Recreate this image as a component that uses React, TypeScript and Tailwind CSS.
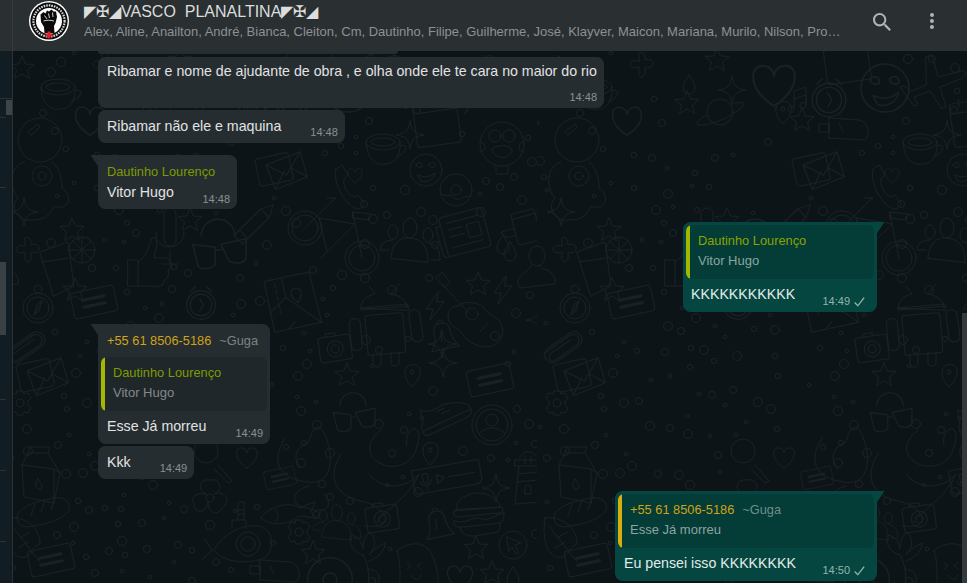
import type { ReactNode } from "react";

const shapes: Record<string, ReactNode> = {
  star: <path d="M0-12L3.5-4 12-3.5 5.5 2 7.5 10.5 0 6-7.5 10.5-5.5 2-12-3.5-3.5-4Z" />,
  sparkle: <path d="M0-14C1.5-4 4-1.5 14 0C4 1.5 1.5 4 0 14C-1.5 4-4 1.5-14 0C-4-1.5-1.5-4 0-14Z" />,
  cross: <path d="M-3-12C0-14 3-12 3-5C8-7 12-4 11-1C11 3 6 3 3 2C4 8 2 12-1 12C-4 11-3 6-3 2C-8 4-12 2-12-1C-12-4-7-5-3-4Z" />,
  drop: <path d="M0-10C4-4 6-1 6 3A6 6 0 0 1-6 3C-6-1-4-4 0-10Z" />,
  bolt: <path d="M3-14L-9 3H-2L-5 14L9-4H2Z" />,
  heart: <path d="M0 11C-14 2-12-10-5-9C-2-9 0-6 0-4C0-6 2-9 5-9C12-10 14 2 0 11Z" />,
  bike: (
    <g>
      <circle cx="-28" cy="-8" r="17" />
      <circle cx="-28" cy="-8" r="13" />
      <circle cx="29" cy="22" r="17" />
      <circle cx="29" cy="22" r="13" />
      <path d="M-28-8L-2-34L3-38H-6M-14-18L22-12L-6 16L-14-18M22-12L29 22M20-24L38-22L36-16L20-18ZM22-12L20-24M-6 16L-12 22" />
    </g>
  ),
  people: (
    <g>
      <ellipse cx="0" cy="-18" rx="7" ry="10" />
      <ellipse cx="-17" cy="-14" rx="5" ry="7" />
      <ellipse cx="18" cy="-11" rx="5" ry="7" />
      <path d="M-19 12C-18-5-8-9 0-8C10-7 18-2 18 16ZM-21 4H-30C-30-3-24-6-17-6M21 14H30C30 4 26-2 19-3" />
    </g>
  ),
  news: (
    <g transform="rotate(-15)">
      <rect x="-22" y="-20" width="44" height="40" rx="3" />
      <path d="M-22-12H-27V16C-27 20-25 20-22 20M-16-13H16M-16-6H-1M-16 1H-1M-16 12H16" />
      <rect x="3" y="-7" width="13" height="14" rx="2" />
    </g>
  ),
  mug: (
    <g transform="rotate(-15)">
      <rect x="-12" y="-15" width="24" height="32" rx="3" />
      <path d="M12-9H20V8H12M-12-10H12M-12 6C-18 8-24 6-26 0C-20-1-16-1-12 0" />
    </g>
  ),
  person: <path d="M-8-14A8 10 0 1 1 8-14A8 10 0 1 1-8-14M-6-5C-6 0-14 2-18 8C-20 12-19 16-17 18L18 14C20 6 12-1 6-1C4-3 3-4 3-5" />,
  compass: (
    <g>
      <circle r="15" />
      <circle r="11" />
      <circle cy="-19" r="4" />
      <path d="M4-7L-4 7L-1-3Z M4-7L1 3L-4 7" />
    </g>
  ),
  android: (
    <g>
      <path d="M-24-10C-24-22-10-24-10-24L-16-32M22-10C22-22 6-24 6-24L14-34M-24-10L22-14C24-10 24-8 24-8ZM-24-10V-8L24-12" />
      <rect x="-20" y="-4" width="38" height="40" rx="3" transform="rotate(-5)" />
      <rect x="-36" y="-2" width="11" height="32" rx="5" transform="rotate(-5)" />
      <rect x="24" y="-4" width="11" height="32" rx="5" transform="rotate(-8)" />
      <path d="M-12 36V46C-12 50-4 50-4 46V36M6 34V45C6 49 14 49 14 45V34" />
    </g>
  ),
  guitar: (
    <g>
      <path d="M-30-28L-4 0M-36-34L-30-40L-22-30L-27-25ZM-14-6C-28-6-26 12-16 16C-10 18-8 30 8 34C22 38 34 28 30 14C28 4 16 4 12-4C6-10-8-12-14-6Z" />
      <circle cx="0" cy="2" r="6" />
      <path d="M8 20L16 11" />
    </g>
  ),
  map: (
    <g transform="rotate(-12)">
      <path d="M-24-22H22L24 30L-24 30ZM-24 10L-6 -2L24 30M-6-22V-2M-2 24L-10 30" strokeDasharray="none" />
      <path d="M-14-18V16" strokeDasharray="4 3" />
      <path d="M0-4A5 5 0 0 1 10-4C10 0 5 6 5 6C5 6 0 0 0-4Z" />
    </g>
  ),
  camera: (
    <g transform="rotate(-8)">
      <rect x="-16" y="-11" width="32" height="25" rx="3" />
      <path d="M-8-11V-14H2V-11" />
      <circle cy="2" r="8" />
      <circle cy="2" r="4" />
    </g>
  ),
  bell: (
    <g transform="rotate(-12)">
      <path d="M-14 12C-8 6-8 0-8-6C-8-12-4-14 0-14C5-14 8-11 8-6C8 0 10 6 14 12ZM-3-14A3 3 0 0 1 3-14M-2 4L-1-6" />
    </g>
  ),
  clip: (
    <g transform="rotate(-35)">
      <path d="M-20-2H12A6 6 0 0 1 12 10H-14A4 4 0 0 1-14 2H10" />
      <rect x="-21" y="-4" width="42" height="16" rx="8" />
    </g>
  ),
  envelope: (
    <g transform="rotate(-12)">
      <rect x="-24" y="-14" width="34" height="28" rx="3" />
      <path d="M-14-6L22-12L24 14L-10 20ZM-14-6L4 8L22-12M-10 20L2 4M24 14L10 2" />
    </g>
  ),
  msg: (
    <g transform="rotate(-12)">
      <rect x="-22" y="-13" width="44" height="26" rx="3" />
      <path d="M-11-4H11M-11 3H11" strokeWidth="3" />
    </g>
  ),
  astronaut: (
    <g>
      <circle cy="-22" r="22" />
      <path d="M-12-30L-2-38L0-35L-9-27ZM-16 0C-30 4-32 24-22 36C-30 44-24 60-8 58C4 58 10 54 14 44C28 50 34 34 22 26C22 14 18 4 12 0" />
      <circle cx="2" cy="14" r="10" />
      <circle cx="2" cy="14" r="4" />
    </g>
  ),
  face: (
    <g>
      <circle r="16" />
      <path d="M-10-5C-8-9-3-8-4-3C-6-2-9-3-10-5ZM3-6C6-9 10-8 9-3C7-2 3-3 3-6ZM-8 5C-2 8 4 7 9 3C8 10 0 13-5 11Z" />
    </g>
  ),
  plane: <path d="M-4-28L2-30L8-8L32-14C38-14 36-8 30-6L10 2L16 22L12 24L0 6L-16 12L-12 20L-16 21L-24 10L-30 2L-26 1L-18 6L-4 0Z" />,
  clock: (
    <g>
      <circle r="12" />
      <circle r="9" />
      <path d="M-1-5L2 0L-1 5M-5-15L-9-11M5-15L9-11" />
    </g>
  ),
  music: <path d="M-6 10A3 3 0 1 1-6 9V-9L6-13V6A3 3 0 1 1 6 5V-5L-6-1" />,
  pin: <path d="M-7-4A8 8 0 0 1 8-6C10 0 4 8 0 12C-4 8-8 2-7-4ZM0-5A2 2 0 1 1 0-1A2 2 0 1 1 0-5Z" />,
  planet: (
    <g>
      <circle r="13" />
      <path d="M-13 3C-24 8-26 14-18 13C-8 13 10 5 20-3C26-8 24-12 13-8" />
    </g>
  ),
  burger: (
    <g>
      <path d="M-22-6C-22-16-10-22 0-22C12-22 22-14 22-8ZM-24-4L24-8C26-4 24-2 20-2L-20 2C-24 2-25 0-24-4ZM-24 6C-12 10-4 0 4 4C12 6 20-2 26-2M-24 6C-26 12-20 12-14 12L22 8C26 6 26 2 26-2M-18 12C-18 22-4 22 2 20L20 17C22 14 22 12 22 8" />
    </g>
  ),
  lighthouse: <path d="M-8-20L-2-26H4L10-22M-12-18H12L12-12H-12ZM-8-12L-12 26L14 24L10-12M-10 4L12 2M-9-4L11-6M-2 10A3 3 0 0 1 4 10L4 16H-2ZM-2-22L-2-14M4-22L4-14" />,
  milk: <path d="M-18-10L-12-22H8L10-28H-10L-12-22M-18-10L-16 22L14 28L20-2L8-22M-18-10L14-6L14 28M14-6L20-2M-2 4C2 10 4 12 0 14C-4 14-6 10-2 4Z" />,
  bread: <path d="M-26 6C-26-4-10-10 10-14C24-16 28-8 26-2C22 6 6 12-10 14C-18 16-26 14-26 6ZM-8-8L-12 4M2-12L-2 0M12-14L8-2" />,
  leaf: <path d="M-12-22C4-24 20-14 20 4C10 8 14 12 8 16C-6 22-16 6-12-22ZM-8-14L20 22M0-2L10-8M-2 8L8 2" />,
  gear: (
    <g>
      <circle r="4" />
      <path d="M-3-12H3L4-9L8-10L11-5L8-2V2L11 5L8 10L4 9L3 12H-3L-4 9L-8 10L-11 5L-8 2V-2L-11-5L-8-10L-4-9Z" />
    </g>
  ),
  sub: (
    <g>
      <path d="M-26 10C-18-6 2-16 18-14C34-12 36 10 24 18C10 24-16 24-26 10ZM-8-12V-20H6V-13M-2-20V-38H4V-20M-2-30H4M-2-26H4M-28 10L-36-2M-28 10L-38 20" />
      <circle cx="8" cy="4" r="12" />
      <circle cx="8" cy="4" r="7" />
    </g>
  ),
  fish: <path d="M-26 10C-16-4 4-6 14 0C20-4 24-4 28-6L24 4L30 10C24 10 18 8 12 8C0 18-16 18-26 10ZM-12 1C-8 6-8 10-12 13" />,
  flower: (
    <g>
      <circle r="4" />
      <path d="M-4-4C-14-8-10-20 0-18C10-20 14-8 4-4C14-8 22 2 12 10C8 18-2 16-2 4C-4 16-16 16-16 6C-20 0-14-6-4-4Z" />
    </g>
  ),
  glass: <path d="M-12-10A8 8 0 0 1 12-10M-18-4L-14 12C-12 14-4 14-2 10L-2-2L-18-4ZM2-4L8 8C12 10 18 10 20 6L20-8L2-4ZM-2 0H2" />,
  avatar: (
    <g>
      <circle r="20" />
      <circle r="16" />
      <circle cy="-5" r="6" />
      <path d="M-13 9C-8 1 8 1 13 9" />
    </g>
  ),
  shoe: (
    <g transform="rotate(-25)">
      <path d="M-26-4C-20-10-22-14-20-20C-14-14-6-14 2-16C12-14 22-10 26-4C28 2 24 6 18 6H-22C-28 6-28 0-26-4ZM-26 0H26M-6-12H2M-2-8H6" />
    </g>
  ),
  voice: (
    <g transform="rotate(-10)">
      <path d="M-34-12H34V6C34 10 32 12 28 12H-30C-33 12-34 10-34 6Z" />
      <path d="M-10-4L-3 0L-10 5ZM2 0H28M-24-6A3 3 0 0 1-19-6V1A3 3 0 0 1-24 1ZM-27 0C-27 6-17 6-16 0M-21 5V10" />
    </g>
  ),
  phone: <path d="M-10-18L-4-22L2-12L-2-8C-4-2 2 8 8 10L12 8L18 16L14 22C4 24-14 0-10-18Z" />,
  mic: <path d="M-6-26A6 6 0 0 1 6-26V0A6 6 0 0 1-6 0ZM-14-8C-16 12 14 12 14-8M0 10V24M-8 24H8" />,
  cup: (
    <g>
      <ellipse cx="-2" cy="-8" rx="17" ry="8" />
      <ellipse cx="-2" cy="-8" rx="12" ry="4" />
      <path d="M-19-8C-18 10-8 16 0 14C10 14 16 6 15-8M15-4C24-8 22 4 12 6" />
    </g>
  ),
  donut: (
    <g>
      <circle r="16" />
      <circle r="5" />
      <path d="M-14 4C-8 8-6 2-2 8C2 12 6 6 14 6" />
    </g>
  ),
  monkey: (
    <g>
      <circle cy="-4" r="22" />
      <circle cx="-7" cy="-12" r="6" />
      <circle cx="7" cy="-12" r="6" />
      <path d="M-22-6A5 5 0 1 1-22 4M22-6A5 5 0 1 0 22 4M-10 2C-8-4 8-4 10 2C10 10-6 14-10 2ZM-6 18V26H6V18" />
    </g>
  ),
  pencil: (
    <g transform="rotate(-45)">
      <path d="M-24-6H14L26 0L14 6H-24ZM-16-6V6M14-6V6" />
    </g>
  ),
  thumb: <path d="M-18-4H-8V22H-18ZM-8-2C0-6 2-16 6-26C10-28 12-22 10-16L8-6H20C26-6 26 4 22 6C24 12 20 16 18 16C18 22 12 24 6 22H-8" />,
  glassLemon: (
    <g>
      <path d="M-22-16L6-26L12 18L-8 28Z M-20-6L8-10" />
      <circle cx="20" cy="-18" r="13" />
      <path d="M20-31V-5M7-18H33M11-27L29-9M29-27L11-9" />
    </g>
  ),
  calendar: (
    <g transform="rotate(-8)">
      <rect x="-22" y="-24" width="44" height="44" rx="3" />
      <path d="M-22-14H22M-12-28V-20M12-28V-20" />
    </g>
  ),
  octopus: (
    <path d="M-72-32C-86-10-80 8-50 12C-28 16-22-6-30-30C-36-48-44-46-48-28C-60-24-66-12-56-2M-16-16C-30 6-24 26 8 32C30 38 40 60 8 56M-48 16C-66 20-68 36-50 38C-34 44-22 38-32 24M24-40C6-26 10-10 30-4C44-2 60-8 62-34C62-48 46-40 50-24M12 4C24 20 48 20 62 4C52 28 32 36 20 52" />
  ),
  magnifier: <path d="M8 8L22 24L18 26L4 12M-16-6A12 12 0 1 1 8-6A12 12 0 1 1-16-6" />,
  plant: <path d="M0 32C4 16 0 6-4-2C-18-6-18-18-16-22C-8-20-6-16-4-8C-4-18 0-24 4-24C10-16 8-8 2-2C6-8 14-12 18-14C18-6 12 0 2 4M-10 24A12 12 0 0 0 12 24C14 14 4 12 0 12" />,
  toast: <path d="M-20-16C-10-26 8-26 14-14C24 6 22 28 18 40H-20C-16 20-16 -6-20-16ZM-10-4L-6-1L-10 2M4-4L0-1L4 2M-6 8C-2 14 2 14 4 8" />,
  bottle: <path d="M-18-10L12-8C22-6 24 8 18 12L-18 10ZM-18-4H-28V4H-18ZM-8-4L-4 4" />,
  cursor: (
    <g>
      <circle r="14" />
      <path d="M-6-8L8-2L2 0L6 8L3 9L-1 2L-4 6Z" />
    </g>
  ),
};

// x, y in the repeating 537px tile
const placed: [string, number, number, number?][] = [
  ["star", 22, 68], ["sparkle", 24, 212], ["cross", 28, 250], ["compass", 38, 308], ["clip", 24, 344],
  ["envelope", 42, 374], ["gear", 20, 403], ["star", 75, 290], ["milk", 40, 475], ["bread", 43, 512],
  ["leaf", 20, 540], ["msg", 51, 560], ["astronaut", 40, 162], ["glassLemon", 62, 268], ["msg", 94, 302],
  ["thumb", 146, 264], ["mic", 170, 240], ["clock", 201, 305, 1.2], ["map", 292, 298], ["pencil", 255, 223],
  ["glass", 218, 250, 1.4], ["bike", 333, 236], ["people", 410, 246], ["news", 465, 232], ["mug", 526, 226],
  ["person", 0, 270], ["person", 537, 270], ["android", 385, 318], ["guitar", 472, 312], ["camera", 335, 347],
  ["bell", 443, 337], ["bolt", 503, 290], ["bolt", 435, 306], ["star", 478, 284], ["sparkle", 540, 320],
  ["msg", 490, 380], ["pin", 412, 375], ["sparkle", 442, 344], ["sparkle", 443, 363], ["star", 347, 375],
  ["glass", 353, 417, 1.1], ["shoe", 447, 420], ["avatar", 492, 425], ["octopus", 357, 470], ["pin", 430, 453],
  ["voice", 447, 477], ["sparkle", 496, 488], ["lighthouse", 527, 478], ["burger", 478, 515], ["bell", 438, 525],
  ["camera", 382, 517], ["people", 337, 527, 0.8], ["gear", 299, 532], ["sub", 240, 540], ["fish", 287, 508],
  ["flower", 210, 498], ["magnifier", 210, 457], ["heart", 247, 457], ["msg", 280, 478, 0.7], ["cursor", 513, 545],
  ["bottle", 278, 570], ["donut", 330, 580, 1.4], ["toast", 417, 567], ["plant", 367, 557], ["star", 313, 553],
  ["star", 476, 548], ["star", 492, 573], ["heart", 460, 577, 1.2], ["drop", 513, 577], ["drop", 510, 252],
  ["drop", 503, 245], ["calendar", 437, 125], ["cup", 385, 150], ["envelope", 281, 168], ["monkey", 502, 148],
  ["face", 426, 170], ["phone", 346, 187], ["heart", 355, 175, 0.7], ["donut", 456, 190], ["heart", 237, 84, 2],
  ["clock", 292, 100, 1.4], ["planet", 183, 112], ["face", 348, 88, 1.5], ["plane", 393, 85], ["calendar", 310, 62],
  ["music", 263, 100], ["pin", 246, 112], ["star", 150, 103], ["bottle", 310, 128], ["star", 265, 120],
  ["cross", 105, 65], ["heart", 90, 120, 1.4], ["sparkle", 195, 90], ["star", 180, 60], ["sparkle", 410, 135],
  ["star", 72, 230], ["drop", 152, 85], ["bolt", 470, 100], ["cup", 60, 95], ["star", 190, 220],
];

function makeDots() {
  const dots: { x: number; y: number; r: number }[] = [];
  let seed = 7;
  for (let i = 0; i < 1400 && dots.length < 230; i++) {
    seed = (seed * 1103515245 + 12345) % 2147483648;
    const x = seed % 537;
    seed = (seed * 1103515245 + 12345) % 2147483648;
    const y = 50 + (seed % 533);
    const r = 1.8 + ((seed >> 8) % 4) * 0.9;
    const clear = placed.every(([, px, py, s]) => Math.hypot(px - x, py - y) > 24 * (s ?? 1));
    const spaced = dots.every((d) => Math.hypot(d.x - x, d.y - y) > 13);
    if (clear && spaced) dots.push({ x, y, r });
  }
  return dots;
}
const dots = makeDots();

function Doodles() {
  return (
    <svg className="absolute inset-0 h-full w-full" aria-hidden="true">
      <defs>
        <pattern id="doodles" width="537" height="583" patternUnits="userSpaceOnUse">
          <g fill="none" stroke="#192126" strokeWidth="1" strokeLinejoin="round" strokeLinecap="round">
            {placed.map(([name, x, y, s], i) => (
              <g key={i} transform={`translate(${x} ${y - 51}) scale(${s ?? 1})`}>
                {shapes[name]}
              </g>
            ))}
            {dots.map((d, i) => (
              <circle key={i} cx={d.x} cy={d.y - 51} r={d.r} />
            ))}
          </g>
        </pattern>
      </defs>
      <rect width="100%" height="100%" fill="url(#doodles)" />
    </svg>
  );
}

function Logo() {
  return (
    <svg width="40" height="40" viewBox="0 0 40 40" className="shrink-0">
      <circle cx="20" cy="20" r="20" fill="#fff" />
      <circle cx="20" cy="20" r="18.6" fill="#0a0a0a" />
      <circle cx="20" cy="20" r="15.6" fill="none" stroke="#d8d8d8" strokeWidth="2.2" strokeDasharray="1.6 1" />
      <circle cx="20" cy="20" r="13" fill="#fff" />
      <path
        d="M11.5 13.5L14.5 11L16.5 12.5L18 9.5L20 10.5L22.5 8.5L24.5 10.5L27 10.5L28 16L26.5 22L25 25L25.5 32H15.5L15 26L12 21Z"
        fill="#0a0a0a"
      />
      <path d="M15.5 14.5L18 18M19.5 12.5L20.5 17M23.5 11.5L24 16M14.5 20C18 19 21 19 25 20" stroke="#fff" strokeWidth="0.8" fill="none" />
      <path d="M18.6 30.5H21.4V32.6H23.5V35.4H21.4V37.5H18.6V35.4H16.5V32.6H18.6Z" fill="#e0202a" />
    </svg>
  );
}

function Check() {
  return (
    <svg width="16" height="15" viewBox="0 0 16 15" className="ml-[1px] shrink-0" fill="#94b3af">
      <path
        transform="translate(2.5 0.5)"
        d="M10.91 3.316l-.478-.372a.365.365 0 0 0-.51.063L4.566 9.879a.32.32 0 0 1-.484.033L1.891 7.769a.366.366 0 0 0-.515.006l-.423.433a.364.364 0 0 0 .006.514l3.258 3.185c.143.14.361.125.484-.033l6.272-8.048a.366.366 0 0 0-.063-.51z"
      />
    </svg>
  );
}

function Time({ value, mine }: { value: string; mine?: boolean }) {
  return (
    <span className={`flex h-[14px] items-center text-[11px] leading-[14px] ${mine ? "text-[#94b3af]" : "text-[#8b9093]"}`}>
      {value}
      {mine && <Check />}
    </span>
  );
}

function Tail({ mine }: { mine?: boolean }) {
  return mine ? (
    <svg width="8" height="13" viewBox="0 0 8 13" className="absolute left-full top-0" fill="#054740">
      <path d="M0 0H7.5L0 11Z" />
    </svg>
  ) : (
    <svg width="8" height="13" viewBox="0 0 8 13" className="absolute right-full top-0" fill="#262d31">
      <path d="M8 0H.5L8 11Z" />
    </svg>
  );
}

function Quote({ bar, nameColor, mine, head, text }: { bar: string; nameColor?: string; mine?: boolean; head: ReactNode; text: string }) {
  return (
    <div className={`mx-[3px] flex h-[54px] overflow-hidden rounded-[6px] ${mine ? "bg-[#043c37]" : "bg-[#20272a]"}`}>
      <div className={`w-[4px] shrink-0 ${bar}`} />
      <div className={`flex flex-col pl-[8px] pt-[7px] text-[13px] leading-[17px] ${nameColor ?? ""}`}>
        <div className="text-[12.8px]">{head}</div>
        <div className={`mt-[3px] ${mine ? "text-[#8ba5a1]" : "text-[#84898c]"}`}>{text}</div>
      </div>
    </div>
  );
}

function TextRow({ text, time, mine, pl = "pl-[9px]" }: { text: string; time: string; mine?: boolean; pl?: string }) {
  return (
    <div className={`mt-[6px] flex items-end justify-between pb-[4px] ${pl} ${mine ? "pr-[10px]" : "pr-[7px]"}`}>
      <span className="mb-[4px] text-[14.2px] leading-[19px]">{text}</span>
      <Time value={time} mine={mine} />
    </div>
  );
}

function Phone({ dim }: { dim: string }) {
  return (
    <span className="text-[#d0a318]">
      +55 61 8506-5186<span className={`ml-[8px] ${dim}`}>~Guga</span>
    </span>
  );
}

export default function App() {
  return (
    <div className="relative flex h-[583px] w-[967px] flex-col overflow-hidden bg-[#0d1418] font-['Liberation_Sans',Arial,sans-serif] text-[#e1e2e3]">
      <header className="z-10 flex h-[51px] shrink-0 bg-[#2a2f32]">
        <div className="w-[13px] shrink-0 border-r border-[#363c3f]" />
        <div className="ml-[16px] flex h-[42px] items-start pt-[1px]">
          <Logo />
        </div>
        <div className="ml-[15px] w-[757px] min-w-0">
          <div className="mt-[1px] whitespace-pre text-[16px] leading-[21px] text-[#dcdddd]">
            {"◤✠◢VASCO\u00a0\u00a0PLANALTINA◤✠◢"}
          </div>
          <div className="mt-[1px] whitespace-nowrap text-[13px] leading-[17px] text-[#8d9194]">
            Alex, Aline, Anailton, André, Bianca, Cleiton, Cm, Dautinho, Filipe, Guilherme, José, Klayver, Maicon, Mariana, Murilo, Nilson, Pro…
          </div>
        </div>
        <svg width="24" height="24" viewBox="0 0 24 24" fill="#b1b3b5" className="ml-[29px] mt-[10px]">
          <path d="M15.9 14.3H15l-.3-.3c1-1.1 1.6-2.7 1.6-4.3 0-3.7-3-6.7-6.7-6.7S3 6 3 9.7s3 6.7 6.7 6.7c1.6 0 3.2-.6 4.3-1.6l.3.3v.8l5.1 5.1 1.5-1.5-5-5.2zm-6.2 0c-2.6 0-4.6-2.1-4.6-4.6s2.1-4.6 4.6-4.6 4.6 2.1 4.6 4.6-2 4.6-4.6 4.6z" />
        </svg>
        <svg width="24" height="24" viewBox="0 0 24 24" fill="#b1b3b5" className="ml-[26px] mt-[10px]">
          <path d="M12 7a2 2 0 1 0-.001-4.001A2 2 0 0 0 12 7zm0 2a2 2 0 1 0-.001 3.999A2 2 0 0 0 12 9zm0 6a2 2 0 1 0-.001 3.999A2 2 0 0 0 12 15z" />
        </svg>
      </header>

      <div className="relative flex min-h-0 flex-1">
        <Doodles />

        {/* left pane edge with its scrollbars */}
        <div className="relative w-[13px] shrink-0 border-r border-[#2a3235] bg-[#121c23]">
          <div className="absolute left-0 top-[47px] h-px w-[12px] bg-[#2a3235]" />
          <div className="absolute left-[6px] top-[49px] h-[15px] w-[6px] bg-[#3d4548]" />
          <div className="absolute left-0 top-[66px] h-px w-[6px] bg-[#2a3235]" />
          <div className="absolute left-0 top-[136px] h-px w-[6px] bg-[#2a3235]" />
          <div className="absolute left-0 top-[211px] h-[73px] w-[6px] bg-[#3a4144]" />
          <div className="absolute left-0 top-[348px] h-px w-[6px] bg-[#2a3235]" />
          <div className="absolute left-0 top-[419px] h-px w-[6px] bg-[#2a3235]" />
          <div className="absolute left-0 top-[490px] h-px w-[6px] bg-[#2a3235]" />
        </div>

        <main className="relative flex min-w-0 flex-1 flex-col items-start pl-[85px] pr-[90px]">
          <div className="h-[3px] w-[300px] rounded-b-[6px] bg-[#262d31]" />

          <div className="mt-[3px] flex w-[506px] flex-col rounded-[7.5px] bg-[#262d31] pb-[4px] pl-[9px] pr-[7px] pt-[5px]">
            <span className="text-[14.2px] leading-[19px]">
              Ribamar e nome de ajudante de obra , e olha onde ele te cara no maior do rio
            </span>
            <div className="mt-[9px] self-end">
              <Time value="14:48" />
            </div>
          </div>

          <div className="mt-[2px] flex items-end gap-[29px] rounded-[7.5px] bg-[#262d31] pb-[4px] pl-[9px] pr-[7px] pt-[7px]">
            <span className="mb-[3px] text-[14.2px] leading-[19px]">Ribamar não ele e maquina</span>
            <Time value="14:48" />
          </div>

          <div className="relative mt-[12px] w-[139px] rounded-[7.5px] rounded-tl-none bg-[#262d31] pb-[3px] pt-[8px]">
            <Tail />
            <div className="pl-[9px] text-[12.8px] leading-[17px] text-[#7f9a00]">Dautinho Lourenço</div>
            <div className="mt-[3px] flex items-end justify-between pl-[9px] pr-[7px]">
              <span className="mb-[4px] text-[14.2px] leading-[19px]">Vitor Hugo</span>
              <Time value="14:48" />
            </div>
          </div>

          <div className="relative mt-[13px] w-[194px] self-end rounded-[7.5px] rounded-tr-none bg-[#054740] pt-[3px] text-[#e2ebe9]">
            <Tail mine />
            <Quote mine bar="bg-[#a3b800]" nameColor="text-[#8aa400]" head="Dautinho Lourenço" text="Vitor Hugo" />
            <TextRow mine pl="pl-[8px]" text="KKKKKKKKKKK" time="14:49" />
          </div>

          <div className="relative mt-[12px] w-[172px] rounded-[7.5px] rounded-tl-none bg-[#262d31] pt-[8px]">
            <Tail />
            <div className="pl-[9px] text-[12.8px] leading-[17px]">
              <Phone dim="text-[#7e8285]" />
            </div>
            <div className="mt-[8px]">
              <Quote bar="bg-[#a3b800]" nameColor="text-[#7f9a00]" head="Dautinho Lourenço" text="Vitor Hugo" />
            </div>
            <TextRow text="Esse Já morreu" time="14:49" />
          </div>

          <div className="mt-[2px] flex items-end gap-[29px] rounded-[7.5px] bg-[#262d31] pb-[4px] pl-[9px] pr-[7px] pt-[7px]">
            <span className="mb-[3px] text-[14.2px] leading-[19px]">Kkk</span>
            <Time value="14:49" />
          </div>

          <div className="relative mt-[12px] w-[262px] self-end rounded-[7.5px] rounded-tr-none bg-[#054740] pt-[3px] text-[#e2ebe9]">
            <Tail mine />
            <Quote mine bar="bg-[#d9ae0c]" head={<Phone dim="text-[#6f8f8b]" />} text="Esse Já morreu" />
            <TextRow mine text="Eu pensei isso KKKKKKKK" time="14:50" />
          </div>
        </main>

        {/* right pane scrollbar */}
        <div className="absolute right-0 top-[262px] h-[270px] w-[5px] bg-[#33393c]" />
      </div>
    </div>
  );
}
